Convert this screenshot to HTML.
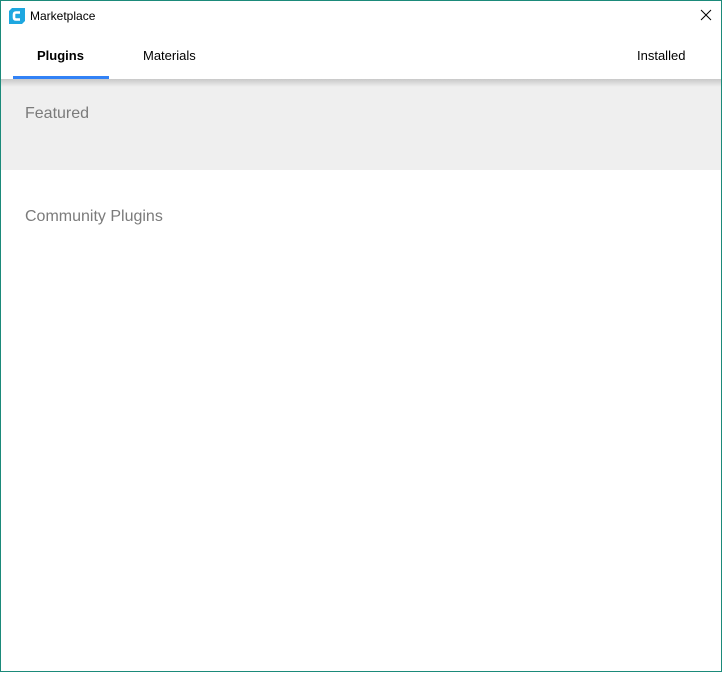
<!DOCTYPE html>
<html><head><style>
html,body{margin:0;padding:0;background:#fff;}
#win{position:absolute;left:0;top:0;width:720px;height:670px;border:1px solid #1b8a7a;background:#fff;font-family:"Liberation Sans",sans-serif;overflow:hidden;}
.t{position:absolute;white-space:nowrap;}
</style></head><body>
<div id="win">
<svg class="t" style="left:8px;top:7px" width="16" height="16" viewBox="0 0 16 16"><path d="M3 0H16V13L13 16H0V3Z" fill="#1ea7e0"/><path d="M11 4.5H7Q5 4.5 5 6.5V9.5Q5 11.5 7 11.5H11" stroke="#fff" stroke-width="2.6" fill="none"/></svg>
<div class="t" style="left:29px;top:8px;font-size:12px;color:#000">Marketplace</div>
<svg class="t" style="left:699px;top:8px" width="12" height="12" viewBox="0 0 12 12"><path d="M1 1L11 11M11 1L1 11" stroke="#000" stroke-width="1"/></svg>
<div class="t" style="left:36px;top:47px;font-size:13px;font-weight:bold;color:#000">Plugins</div>
<div class="t" style="left:142px;top:47px;font-size:13px;color:#000">Materials</div>
<div class="t" style="left:636px;top:47px;font-size:13px;color:#000">Installed</div>
<div class="t" style="left:12px;top:75px;width:96px;height:3px;background:#3282f6"></div>
<div class="t" style="left:0;top:78px;width:720px;height:91px;background:#efefef"></div>
<div class="t" style="left:0;top:78px;width:720px;height:8px;background:linear-gradient(#c8c8c8,#efefef)"></div>
<div class="t" style="left:24px;top:104px;font-size:16px;color:#7b7b7b">Featured</div>
<div class="t" style="left:24px;top:207px;font-size:16px;color:#7b7b7b">Community Plugins</div>
</div>
</body></html>
